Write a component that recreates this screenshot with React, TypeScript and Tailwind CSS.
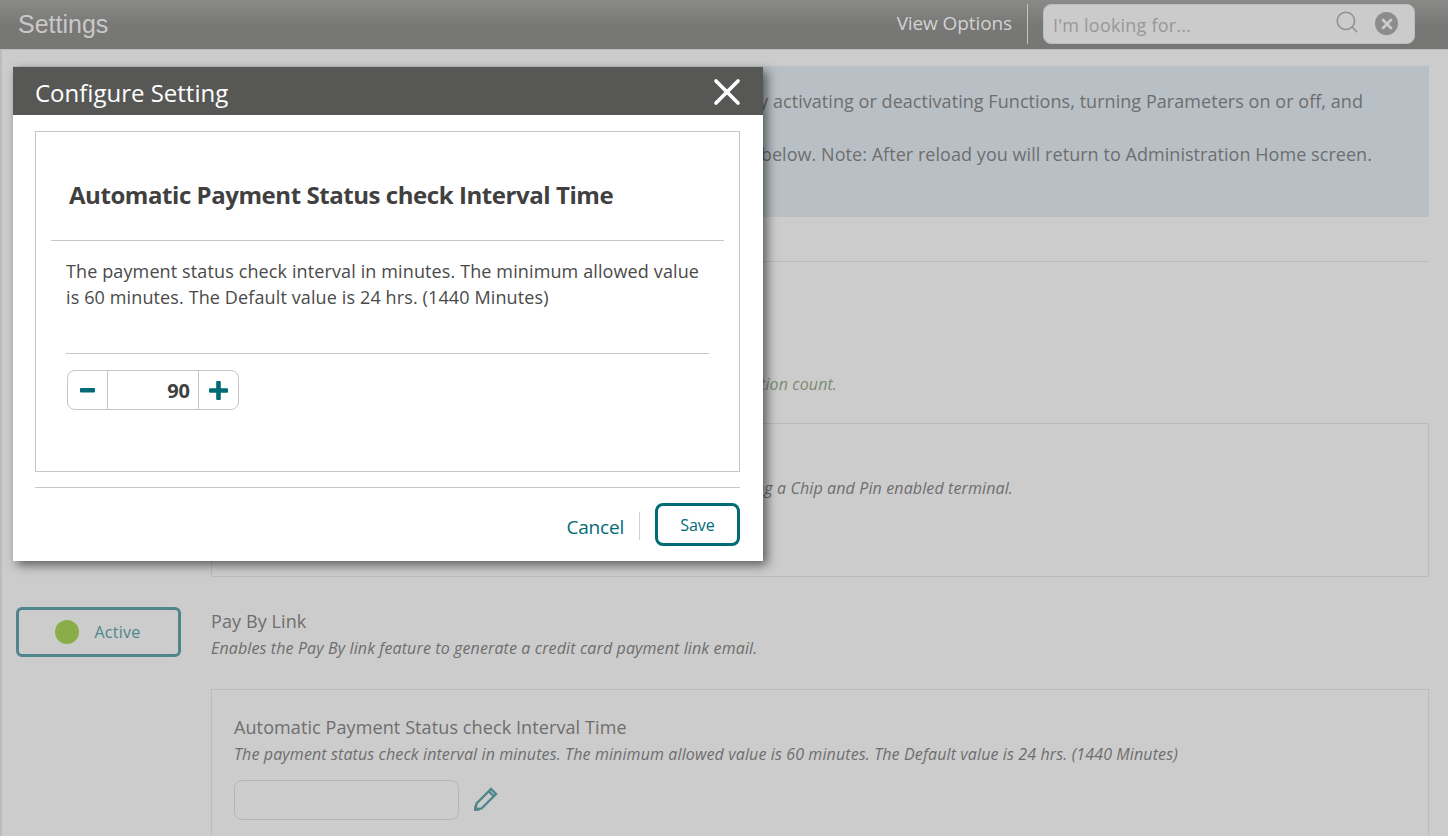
import React from "react";
import { X, Search } from "lucide-react";

const sans = "font-['Open_Sans','Noto_Sans',sans-serif]";

function App() {
  return (
    <div className={`relative w-[1448px] h-[836px] overflow-hidden bg-[#cccccc] ${sans}`}>
      {/* Header */}
      <header className="h-[50px] flex items-center border-b border-[#bdbdbd] bg-gradient-to-b from-[#8a8a88] via-[#787876] to-[#767674]">
        <h1 className="ml-[18px] font-['Liberation_Sans',sans-serif] text-[25px] text-[#c8c8c8] flex-1">Settings</h1>
        <span className="text-[19px] tracking-[-0.1px] text-[#d2d2d2] mr-[15px] -mt-[3px]">View Options</span>
        <div className="w-px h-[40px] bg-[#c4c4c4] mr-[15px] -mt-[2px]" />
        <div className="w-[372px] h-[40px] mr-[33px] -mt-[2px] rounded-[8px] bg-[#cbcbcb] border border-[#bcbcbc] flex items-center pl-[9px] pr-[16px]">
          <span className="flex-1 text-[18px] tracking-[0.2px] text-[#989898] mt-[3px]">I'm looking for...</span>
          <Search className="w-[26px] h-[26px] text-[#8f8f8f] mr-[15px] -mt-[3px]" strokeWidth={1.4} />
          <div className="w-[23px] h-[23px] rounded-full bg-[#8c8c8c] flex items-center justify-center">
            <X className="w-[16px] h-[16px] text-[#cccccc]" strokeWidth={4} />
          </div>
        </div>
      </header>

      {/* Page body */}
      <main className="pl-[14px] pr-[19px] pt-[16px] border-l-2 border-[#bcbcbc]">
        <section className="h-[151px] -ml-[3px] bg-[#b9c0c5] pl-[24px] pr-[66px] pt-[22px] text-[18px] tracking-[0.05px] leading-[26px] text-[#6e6e6e] flex flex-col gap-[27px]">
          <p className="text-right whitespace-nowrap">Settings let you customize the application by activating or deactivating Functions, turning Parameters on or off, and</p>
          <p className="text-right whitespace-nowrap -mr-[9px]">For changes to take effect, reload the application using the button below. Note: After reload you will return to Administration Home screen.</p>
        </section>
        <hr className="mt-[44px] border-[#bbbbbb] -ml-[3px]" />

        <div className="mt-[110px] ml-[195px] text-[16px] italic tracking-[0.12px] text-[#7d8a72] text-right mr-[592px] h-[51px] leading-[24px]">
          a limit on the transaction count.
        </div>

        <div className="ml-[195px] h-[154px] border border-[#bbbbbb] pt-[52px] pr-[415px] text-[16px] italic tracking-[0.12px] text-[#6e6e6e] text-right">
          <p>Enables payment by using a Chip and Pin enabled terminal.</p>
        </div>

        <div className="mt-[30px] flex">
          <button className="w-[165px] h-[50px] rounded-[6px] border-[3px] border-[#4f868c] flex items-center justify-center gap-[15px] pr-[1px]">
            <span className="w-[24px] h-[24px] rounded-full bg-[#8aad4a]" />
            <span className="text-[16px] tracking-[0.26px] text-[#4f868c]">Active</span>
          </button>
          <div className="ml-[30px] mt-[1px]">
            <p className="text-[18px] tracking-[0.1px] leading-[26px] text-[#6e6e6e]">Pay By Link</p>
            <p className="mt-[1px] text-[16px] italic tracking-[0.12px] leading-[26px] text-[#6e6e6e]">Enables the Pay By link feature to generate a credit card payment link email.</p>
          </div>
        </div>

        <div className="mt-[28px] ml-[195px] h-[160px] border border-[#bbbbbb] pl-[22px] pt-[24px]">
          <p className="text-[18px] tracking-[0.1px] leading-[26px] text-[#6e6e6e]">Automatic Payment Status check Interval Time</p>
          <p className="mt-[1px] text-[16px] italic tracking-[0.12px] leading-[26px] text-[#6e6e6e]">The payment status check interval in minutes. The minimum allowed value is 60 minutes. The Default value is 24 hrs. (1440 Minutes)</p>
          <div className="mt-[13px] flex items-center">
            <div className="w-[225px] h-[40px] rounded-[8px] border border-[#b5b5b5]" />
            <svg className="ml-[14px] -mt-[3px]" width="26" height="26" viewBox="0 0 26 26" fill="none" stroke="#4f868c" strokeWidth="2.4">
              <path d="M2.5 23.5 L3.5 17.5 L18 3 L23 8 L8.5 22.5 Z" />
              <path d="M16 5.5 L20.5 10" />
              <path d="M1 25 L1.5 19 L7 24.5 Z" fill="#4f868c" stroke="none" />
            </svg>
          </div>
        </div>
      </main>

      {/* Modal */}
      <div className="absolute left-[13px] top-[67px] w-[750px] h-[494px] bg-white flex flex-col shadow-[4px_4px_10px_rgba(0,0,0,0.55)]">
        <div className="h-[48px] shrink-0 bg-[#575755] flex items-center justify-between pl-[22px] pr-[14px]">
          <h2 className="text-[24px] text-white mt-[3px]">Configure Setting</h2>
          <X className="w-[44px] h-[44px] text-white mt-[2px]" strokeWidth={2} />
        </div>
        <div className="ml-[22px] mr-[23px] mt-[16px] h-[341px] border border-[#c6c6c6] px-[15px]">
          <h3 className="h-[109px] pl-[18px] pt-[44px] text-[24px] leading-[38px] tracking-[-0.44px] font-bold text-[#404040] border-b border-[#c6c6c6]">
            Automatic Payment Status check Interval Time
          </h3>
          <p className="ml-[15px] mr-[15px] mt-[17px] h-[96px] border-b border-[#c6c6c6] text-[18px] leading-[26px] tracking-[0.12px] text-[#4a4a4a]">
            The payment status check interval in minutes. The minimum allowed value is 60 minutes. The Default value is 24 hrs. (1440 Minutes)
          </p>
          <div className="ml-[16px] mt-[16px] w-[172px] h-[40px] rounded-[8px] border border-[#c6c6c6] flex items-center">
            <span className="w-[40px] h-full flex items-center justify-center border-r border-[#c6c6c6]">
              <svg width="15" height="5" viewBox="0 0 15 5"><rect width="15" height="4.5" rx="1" fill="#006b75" /></svg>
            </span>
            <span className="flex-1 text-right pr-[8px] text-[20px] font-bold text-[#404040] mt-[2px]">90</span>
            <span className="w-[40px] h-full flex items-center justify-center border-l border-[#c6c6c6]">
              <svg width="19" height="19" viewBox="0 0 19 19" fill="#006b75"><rect x="7.2" width="4.6" height="19" rx="1" /><rect y="7.2" width="19" height="4.6" rx="1" /></svg>
            </span>
          </div>
        </div>
        <div className="ml-[22px] mr-[23px] mt-[15px] border-t border-[#c6c6c6] flex items-center justify-end pt-[15px]">
          <span className="text-[19px] tracking-[-0.2px] text-[#006b75] mt-[5px]">Cancel</span>
          <span className="w-px h-[28px] bg-[#d0d0d0] mx-[15px] mt-[2px]" />
          <button className="w-[85px] h-[43px] rounded-[8px] border-[3px] border-[#006b75] text-[16px] text-[#006b75]">Save</button>
        </div>
      </div>
    </div>
  );
}

export default App;
